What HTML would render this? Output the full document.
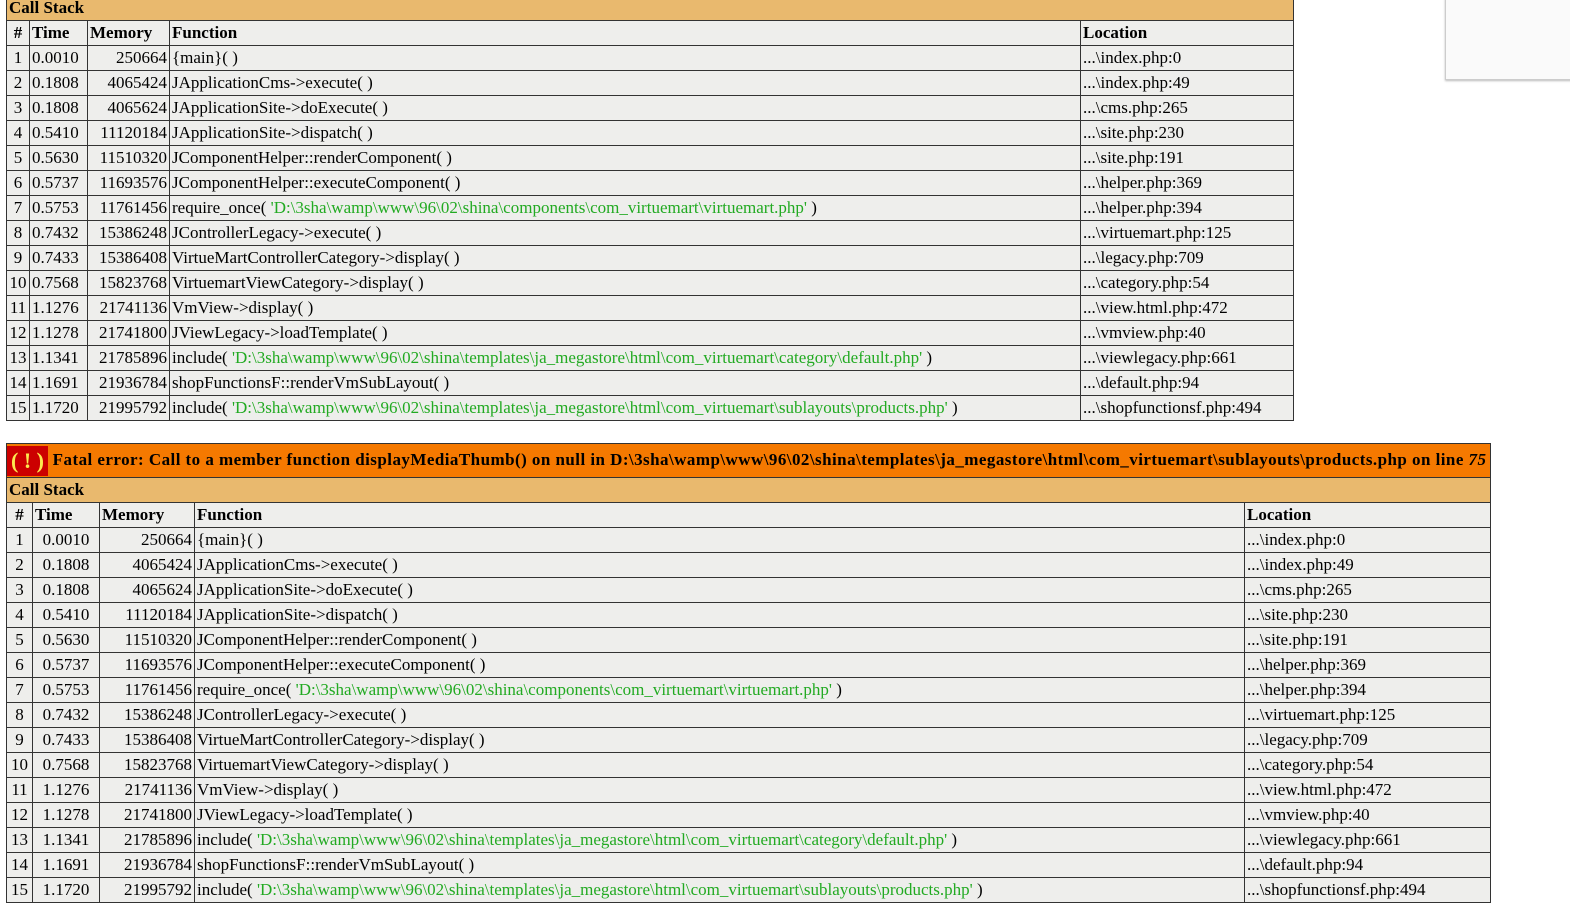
<!DOCTYPE html>
<html><head><meta charset="utf-8"><style>
body{margin:0;background:#fff;width:1570px;height:905px;overflow:hidden;position:relative;font-family:"Liberation Serif",serif;font-size:17px;color:#000}
table{position:absolute;border-collapse:collapse;table-layout:fixed;left:6px}
td,th{border:1px solid #333;padding:0 2px;height:24px;line-height:22px;white-space:nowrap;overflow:hidden;background:#eeeeec;text-align:left;font-weight:normal}
th{font-weight:bold;background:#eeeeec}
.cs th{background:#e9b96e;text-align:left}
.fe th{background:#f57900;height:33px;font-size:17px;letter-spacing:0.45px}
.r{text-align:right}.c{text-align:center}
.g{color:#22aa22}
.ex{display:inline-block;background:#cc0000;color:#fce94f;padding:0 4px;font-size:22px;margin-left:-2px;line-height:30px;vertical-align:middle;letter-spacing:0}
.box{position:absolute;left:1445px;top:-2px;width:140px;height:80px;background:#fafafa;border:1px solid #ccc;box-shadow:0 1px 2px #bbb}
</style></head><body>
<div class="box"></div>
<table style="top:-5px;width:1287px">
<colgroup><col style="width:23px"><col style="width:58px"><col style="width:82px"><col style="width:911px"><col style="width:213px"></colgroup>
<tr class="cs"><th colspan="5">Call Stack</th></tr>
<tr><th class="c">#</th><th>Time</th><th>Memory</th><th>Function</th><th>Location</th></tr>
<tr><td class="c">1</td><td>0.0010</td><td class="r">250664</td><td>{main}( )</td><td>...\index.php:0</td></tr>
<tr><td class="c">2</td><td>0.1808</td><td class="r">4065424</td><td>JApplicationCms-&gt;execute( )</td><td>...\index.php:49</td></tr>
<tr><td class="c">3</td><td>0.1808</td><td class="r">4065624</td><td>JApplicationSite-&gt;doExecute( )</td><td>...\cms.php:265</td></tr>
<tr><td class="c">4</td><td>0.5410</td><td class="r">11120184</td><td>JApplicationSite-&gt;dispatch( )</td><td>...\site.php:230</td></tr>
<tr><td class="c">5</td><td>0.5630</td><td class="r">11510320</td><td>JComponentHelper::renderComponent( )</td><td>...\site.php:191</td></tr>
<tr><td class="c">6</td><td>0.5737</td><td class="r">11693576</td><td>JComponentHelper::executeComponent( )</td><td>...\helper.php:369</td></tr>
<tr><td class="c">7</td><td>0.5753</td><td class="r">11761456</td><td>require_once( <span class="g">'D:\3sha\wamp\www\96\02\shina\components\com_virtuemart\virtuemart.php'</span> )</td><td>...\helper.php:394</td></tr>
<tr><td class="c">8</td><td>0.7432</td><td class="r">15386248</td><td>JControllerLegacy-&gt;execute( )</td><td>...\virtuemart.php:125</td></tr>
<tr><td class="c">9</td><td>0.7433</td><td class="r">15386408</td><td>VirtueMartControllerCategory-&gt;display( )</td><td>...\legacy.php:709</td></tr>
<tr><td class="c">10</td><td>0.7568</td><td class="r">15823768</td><td>VirtuemartViewCategory-&gt;display( )</td><td>...\category.php:54</td></tr>
<tr><td class="c">11</td><td>1.1276</td><td class="r">21741136</td><td>VmView-&gt;display( )</td><td>...\view.html.php:472</td></tr>
<tr><td class="c">12</td><td>1.1278</td><td class="r">21741800</td><td>JViewLegacy-&gt;loadTemplate( )</td><td>...\vmview.php:40</td></tr>
<tr><td class="c">13</td><td>1.1341</td><td class="r">21785896</td><td>include( <span class="g">'D:\3sha\wamp\www\96\02\shina\templates\ja_megastore\html\com_virtuemart\category\default.php'</span> )</td><td>...\viewlegacy.php:661</td></tr>
<tr><td class="c">14</td><td>1.1691</td><td class="r">21936784</td><td>shopFunctionsF::renderVmSubLayout( )</td><td>...\default.php:94</td></tr>
<tr><td class="c">15</td><td>1.1720</td><td class="r">21995792</td><td>include( <span class="g">'D:\3sha\wamp\www\96\02\shina\templates\ja_megastore\html\com_virtuemart\sublayouts\products.php'</span> )</td><td>...\shopfunctionsf.php:494</td></tr>
</table>

<table style="top:443px;width:1484px">
<colgroup><col style="width:26px"><col style="width:67px"><col style="width:95px"><col style="width:1050px"><col style="width:246px"></colgroup>
<tr class="fe"><th colspan="5"><span class="ex">( ! )</span> Fatal error: Call to a member function displayMediaThumb() on null in D:\3sha\wamp\www\96\02\shina\templates\ja_megastore\html\com_virtuemart\sublayouts\products.php on line <i>75</i></th></tr>
<tr class="cs"><th colspan="5">Call Stack</th></tr>
<tr><th class="c">#</th><th>Time</th><th>Memory</th><th>Function</th><th>Location</th></tr>
<tr><td class="c">1</td><td class="c">0.0010</td><td class="r">250664</td><td>{main}( )</td><td>...\index.php:0</td></tr>
<tr><td class="c">2</td><td class="c">0.1808</td><td class="r">4065424</td><td>JApplicationCms-&gt;execute( )</td><td>...\index.php:49</td></tr>
<tr><td class="c">3</td><td class="c">0.1808</td><td class="r">4065624</td><td>JApplicationSite-&gt;doExecute( )</td><td>...\cms.php:265</td></tr>
<tr><td class="c">4</td><td class="c">0.5410</td><td class="r">11120184</td><td>JApplicationSite-&gt;dispatch( )</td><td>...\site.php:230</td></tr>
<tr><td class="c">5</td><td class="c">0.5630</td><td class="r">11510320</td><td>JComponentHelper::renderComponent( )</td><td>...\site.php:191</td></tr>
<tr><td class="c">6</td><td class="c">0.5737</td><td class="r">11693576</td><td>JComponentHelper::executeComponent( )</td><td>...\helper.php:369</td></tr>
<tr><td class="c">7</td><td class="c">0.5753</td><td class="r">11761456</td><td>require_once( <span class="g">'D:\3sha\wamp\www\96\02\shina\components\com_virtuemart\virtuemart.php'</span> )</td><td>...\helper.php:394</td></tr>
<tr><td class="c">8</td><td class="c">0.7432</td><td class="r">15386248</td><td>JControllerLegacy-&gt;execute( )</td><td>...\virtuemart.php:125</td></tr>
<tr><td class="c">9</td><td class="c">0.7433</td><td class="r">15386408</td><td>VirtueMartControllerCategory-&gt;display( )</td><td>...\legacy.php:709</td></tr>
<tr><td class="c">10</td><td class="c">0.7568</td><td class="r">15823768</td><td>VirtuemartViewCategory-&gt;display( )</td><td>...\category.php:54</td></tr>
<tr><td class="c">11</td><td class="c">1.1276</td><td class="r">21741136</td><td>VmView-&gt;display( )</td><td>...\view.html.php:472</td></tr>
<tr><td class="c">12</td><td class="c">1.1278</td><td class="r">21741800</td><td>JViewLegacy-&gt;loadTemplate( )</td><td>...\vmview.php:40</td></tr>
<tr><td class="c">13</td><td class="c">1.1341</td><td class="r">21785896</td><td>include( <span class="g">'D:\3sha\wamp\www\96\02\shina\templates\ja_megastore\html\com_virtuemart\category\default.php'</span> )</td><td>...\viewlegacy.php:661</td></tr>
<tr><td class="c">14</td><td class="c">1.1691</td><td class="r">21936784</td><td>shopFunctionsF::renderVmSubLayout( )</td><td>...\default.php:94</td></tr>
<tr><td class="c">15</td><td class="c">1.1720</td><td class="r">21995792</td><td>include( <span class="g">'D:\3sha\wamp\www\96\02\shina\templates\ja_megastore\html\com_virtuemart\sublayouts\products.php'</span> )</td><td>...\shopfunctionsf.php:494</td></tr>
</table>
</body></html>
